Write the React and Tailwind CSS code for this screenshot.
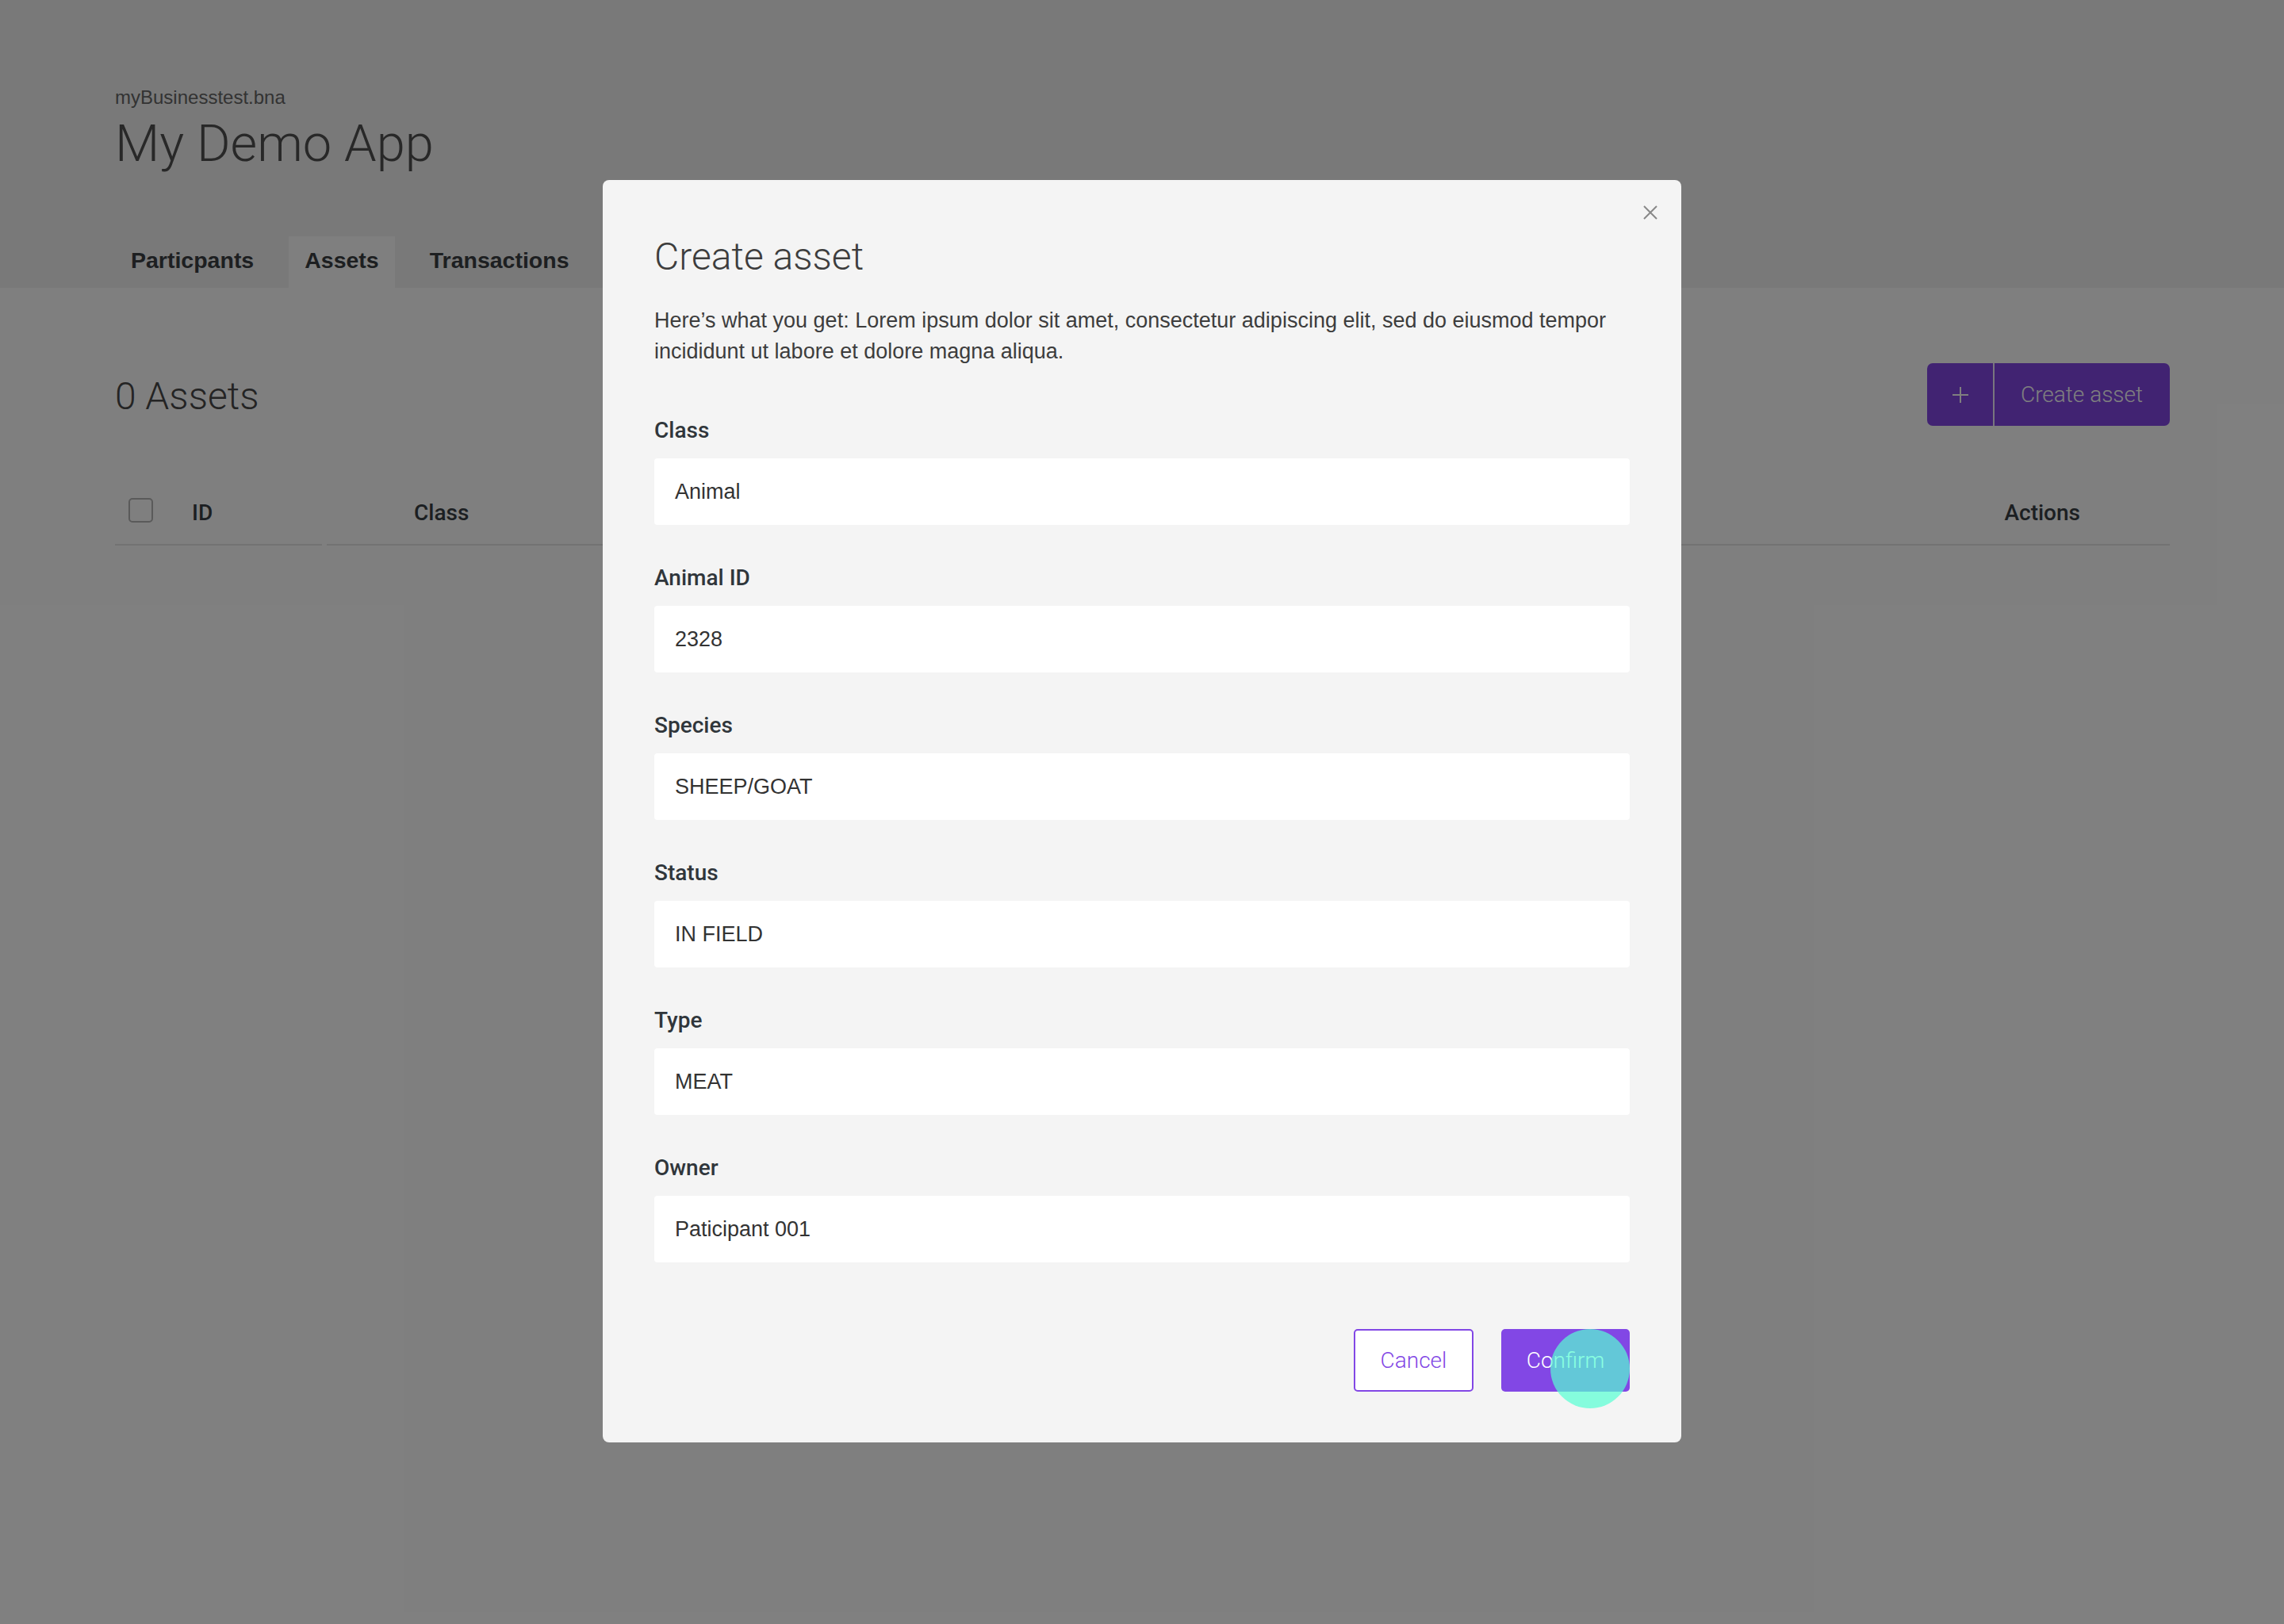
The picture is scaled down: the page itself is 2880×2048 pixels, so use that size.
export default function App() {
  const fields = [
    ["Class", "Animal"],
    ["Animal ID", "2328"],
    ["Species", "SHEEP/GOAT"],
    ["Status", "IN FIELD"],
    ["Type", "MEAT"],
    ["Owner", "Paticipant 001"],
  ];
  const tabs = ["Particpants", "Assets", "Transactions"];
  return (
    <div className="relative min-h-[2048px] w-full overflow-hidden bg-white font-['Liberation_Sans',Arial,sans-serif]">
      <header className="bg-[#f2f2f2] pl-[145px] pt-[110px]">
        <div className="text-[24px] leading-[26px] text-[#666666]">myBusinesstest.bna</div>
        <h1 className="mt-[13px] font-['Roboto',sans-serif] text-[65px] font-light leading-[64px] text-[#505050]">
          My Demo App
        </h1>
        <nav className="mt-[85px] flex gap-[24px]">
          {tabs.map((t) => (
            <div
              key={t}
              className={
                "h-[65px] px-[20px] pt-[16px] text-[28.5px] font-bold leading-[28px] text-[#3a3e42] " +
                (t === "Assets" ? "bg-white" : "")
              }
            >
              {t}
            </div>
          ))}
        </nav>
      </header>

      <main className="pl-[145px] pr-[144px]">
        <div className="mt-[95px] flex h-[79px] items-center justify-between">
          <div className="pt-[4px] font-['Roboto',sans-serif] text-[48px] font-light leading-[48px] text-[#484848]">
            0 Assets
          </div>
          <button className="flex h-[79px] w-[306px] overflow-hidden rounded-[7px] bg-[#8247e5] text-white">
            <span className="flex w-[83px] items-center justify-center">
              <svg width="20" height="20" viewBox="0 0 20 20">
                <path d="M10 0v20M0 10h20" stroke="white" strokeWidth="2" />
              </svg>
            </span>
            <span className="w-[2px] bg-white/90" />
            <span className="flex flex-1 items-center pl-[33px] font-['Roboto',sans-serif] text-[28px] font-light">
              Create asset
            </span>
          </button>
        </div>

        <div className="mt-[71px] flex text-[28px] leading-[28px] text-[#383e44]">
          <div className="flex h-[80px] w-[261px] items-center border-b-2 border-[#e4e4e4] pl-[17px]">
            <span className="mb-[7px] h-[31px] w-[31px] rounded-[5px] border-2 border-[#b4b4b4] bg-white" />
            <span className="ml-[49px] font-['Roboto',sans-serif] font-medium">ID</span>
          </div>
          <div className="ml-[6px] flex h-[80px] w-[261px] items-center border-b-2 border-[#e4e4e4] pl-[110px] font-['Roboto',sans-serif] font-medium">
            Class
          </div>
          <div className="flex h-[80px] flex-1 items-center justify-end border-b-2 border-[#e4e4e4] pr-[113px] font-['Roboto',sans-serif] font-medium">
            Actions
          </div>
        </div>
      </main>

      <div className="absolute inset-0 bg-black/50" />

      <div className="absolute left-[760px] top-[227px] flex h-[1592px] w-[1360px] flex-col rounded-[8px] bg-[#f4f4f4] px-[65px] pt-[69px]">
        <button className="absolute right-[30px] top-[32px] h-[18px] w-[18px]">
          <svg width="18" height="18" viewBox="0 0 18 18">
            <path d="M1 1L17 17M17 1L1 17" stroke="#888888" strokeWidth="2" />
          </svg>
        </button>
        <h2 className="font-['Roboto',sans-serif] text-[48px] font-light leading-[56px] text-[#3d3d3d]">
          Create asset
        </h2>
        <p className="mt-[33px] whitespace-nowrap text-[27px] leading-[39px] text-[#3d3d3d]">
          Here’s what you get: Lorem ipsum dolor sit amet, consectetur adipiscing elit, sed do eiusmod tempor
          <br />
          incididunt ut labore et dolore magna aliqua.
        </p>
        <div className="mt-[66px] flex flex-col gap-[53px]">
          {fields.map(([label, value]) => (
            <div key={label} className="flex flex-col">
              <label className="font-['Roboto',sans-serif] text-[28px] font-medium leading-[28px] text-[#30363b]">
                {label}
              </label>
              <div className="mt-[21px] flex h-[84px] items-center rounded-[4px] bg-white px-[26px] text-[27px] leading-[28px] text-[#333333]">
                {value}
              </div>
            </div>
          ))}
        </div>
        <div className="mt-[84px] flex justify-end gap-[35px]">
          <button className="flex h-[79px] w-[151px] items-center justify-center rounded-[5px] border-2 border-[#8247e5] bg-white font-['Roboto',sans-serif] text-[28px] font-light text-[#8247e5]">
            Cancel
          </button>
          <button className="relative flex h-[79px] w-[162px] items-center justify-center rounded-[5px] bg-[#8247e5] font-['Roboto',sans-serif] text-[28px] font-light text-white">
            Confirm
            <span className="pointer-events-none absolute right-0 top-0 h-[100px] w-[100px] rounded-full bg-[rgba(85,255,211,0.7)]" />
          </button>
        </div>
      </div>
    </div>
  );
}
